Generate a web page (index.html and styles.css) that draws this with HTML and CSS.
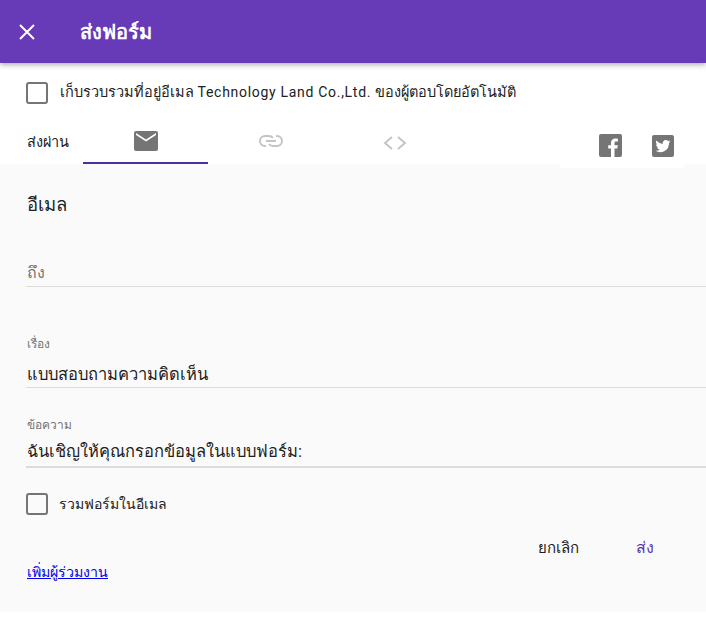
FILE: index.html
```html
<!DOCTYPE html>
<html lang="th">
<head>
    <meta charset="UTF-8">
    <title>ส่งฟอร์ม</title>
    <link rel="stylesheet" href="styles.css">
</head>
<body>
<div class="topbar">
    <svg class="close-icon" viewBox="0 0 24 24" width="24" height="24"><path d="M5 5l14 14M19 5L5 19" fill="none" stroke="#fff" stroke-width="2"/></svg>
    <h1>ส่งฟอร์ม</h1>
</div>

<label class="check-row collect">
    <span class="checkbox"></span>
    <span>เก็บรวบรวมที่อยู่อีเมล <span class="latin">Technology Land Co.,Ltd.</span> ของผู้ตอบโดยอัตโนมัติ</span>
</label>

<div class="tabs">
    <span class="send-via">ส่งผ่าน</span>
    <div class="tab active">
        <svg viewBox="0 0 24 20" width="24" height="20"><path d="M2 0h20a2 2 0 0 1 2 2v16a2 2 0 0 1-2 2H2a2 2 0 0 1-2-2V2a2 2 0 0 1 2-2zm0 4l10 6.500L22 4V2l-10 6.500L2 2z" fill="#757575"/></svg>
    </div>
    <div class="tab dim">
        <svg viewBox="0 0 24 12" width="24" height="12"><path d="M7 11H6A5 5 0 0 1 6 1h4a5 5 0 0 1 4 2M7 6h10M17 1h1a5 5 0 0 1 0 10h-4a5 5 0 0 1-4-2" fill="none" stroke="#c4c4c4" stroke-width="2"/></svg>
    </div>
    <div class="tab dim code">
        <svg viewBox="0 0 24 14" width="24" height="14"><path d="M9 1L2 7l7 6M15 1l7 6-7 6" fill="none" stroke="#c4c4c4" stroke-width="2"/></svg>
    </div>
    <div class="social">
        <svg viewBox="0 0 24 24" width="24" height="24"><rect width="23" height="23" rx="2" fill="#757575"/><path d="M15.500 23v-8.500h2.800l.5-3.300h-3.300V9.200c0-1 .3-1.600 1.600-1.600h1.800V4.700c-.4 0-1.400-.2-2.600-.2-2.600 0-4.300 1.600-4.300 4.400v2.300H9.200v3.300H12V23z" fill="#fff"/></svg>
        <svg viewBox="0 0 24 24" width="24" height="24"><rect x="1" y="1" width="22" height="22" rx="2" fill="#757575"/><path d="M19.500 7.400c-.6.300-1.200.4-1.800.5.600-.4 1.100-1 1.400-1.700-.6.400-1.300.6-2 .8a3.100 3.100 0 0 0-5.300 2.800c-2.600-.1-4.900-1.400-6.400-3.300-.8 1.400-.4 3.200 1 4.100-.5 0-1-.1-1.400-.4 0 1.500 1.100 2.800 2.500 3.100-.5.100-.9.100-1.400.1.400 1.200 1.500 2.100 2.900 2.100a6.200 6.200 0 0 1-4.500 1.300 8.800 8.800 0 0 0 13.500-7.800c.6-.5 1.100-1 1.500-1.600z" fill="#fff"/></svg>
    </div>
</div>

<div class="panel">
    <h2>อีเมล</h2>

    <div class="field to-field">
        <div class="field-value placeholder">ถึง</div>
    </div>

    <div class="field subject-field">
        <div class="field-label">เรื่อง</div>
        <div class="field-value">แบบสอบถามความคิดเห็น</div>
    </div>

    <div class="field message-field">
        <div class="field-label">ข้อความ</div>
        <div class="field-value">ฉันเชิญให้คุณกรอกข้อมูลในแบบฟอร์ม:</div>
    </div>

    <label class="check-row include">
        <span class="checkbox"></span>
        <span>รวมฟอร์มในอีเมล</span>
    </label>

    <div class="actions">
        <span class="btn">ยกเลิก</span>
        <span class="btn primary">ส่ง</span>
    </div>

    <a class="add-link" href="#">เพิ่มผู้ร่วมงาน</a>
</div>
</body>
</html>
```

FILE: styles.css
```css
body {
    margin: 0;
    font-family: Roboto, "Noto Sans", sans-serif;
    background: #fff;
    color: #212121;
    overflow: hidden;
}

/* Top bar */
.topbar {
    height: 63px;
    background: #673ab7;
    display: flex;
    align-items: center;
    padding-left: 15px;
    box-shadow: 0 2px 5px rgba(0, 0, 0, 0.3);
}

.close-icon {
    margin-right: 41px;
}

.topbar h1 {
    margin: 0;
    color: #fff;
    font-size: 20px;
    font-weight: 700;
}

/* Checkboxes */
.check-row {
    display: flex;
    align-items: center;
    font-size: 14px;
}

.checkbox {
    width: 18px;
    height: 18px;
    border: 2px solid #757575;
    border-radius: 3px;
    margin-right: 11px;
    flex-shrink: 0;
}

.collect {
    margin: 18px 0 0 26px;
    font-size: 14.5px;
    line-height: 22px;
}

.collect .checkbox {
    margin-right: 12px;
}

.latin {
    font-size: 14px;
    letter-spacing: 0.7px;
}

/* Tabs */
.tabs {
    display: flex;
    align-items: flex-end;
    height: 60px;
    padding-left: 27px;
}

.send-via {
    width: 56px;
    font-size: 14.5px;
    padding-bottom: 11px;
}

.tab {
    width: 125px;
    height: 44px;
    box-sizing: border-box;
    display: flex;
    justify-content: center;
    padding-top: 11px;
}

.tab.active {
    border-bottom: 2px solid #512da8;
}

.tab.dim {
    padding-top: 15px;
}

.tab.code {
    padding-top: 16px;
}

.tab.code svg {
    margin-left: -2px;
}

/* white notch behind the share icons runs a little into the panel */
.social {
    display: flex;
    gap: 28px;
    margin-left: auto;
    margin-right: 22px;
    margin-bottom: -4px;
    padding: 0 9px 10px 39px;
    background: #fff;
    position: relative;
}

/* Panel */
.panel {
    background: #fafafa;
    height: 448px;
    padding: 27px 0 0 26px;
    box-sizing: border-box;
}

.panel h2 {
    margin: 0;
    padding-left: 1px;
    font-size: 18.5px;
    font-weight: 400;
    line-height: 28px;
}

.field {
    border-bottom: 1px solid #dcdcdc;
}

.field-label {
    padding-left: 1px;
    font-size: 12px;
    color: #757575;
    line-height: 16px;
}

.field-value {
    padding-left: 1px;
    font-size: 16.5px;
    line-height: 24px;
}

.placeholder {
    font-size: 16px;
    color: #757575;
}

.to-field {
    margin-top: 42px;
    padding-bottom: 1px;
}

.subject-field {
    margin-top: 49px;
}

.subject-field .field-value {
    margin-top: 11px;
}

.message-field {
    margin-top: 29px;
    padding-bottom: 2px;
    border-bottom-width: 2px;
}

.message-field .field-value {
    margin-top: 7px;
}

.include {
    margin-top: 25px;
}

/* Actions */
.actions {
    display: flex;
    justify-content: flex-end;
    align-items: center;
    gap: 57px;
    font-size: 15px;
    margin-top: 20px;
    padding-right: 52px;
}

.btn.primary {
    font-size: 16px;
    color: #5e35b1;
}

.add-link {
    display: block;
    padding-left: 1px;
    font-size: 14.2px;
    color: #00e;
    margin-top: 1px;
}
```
